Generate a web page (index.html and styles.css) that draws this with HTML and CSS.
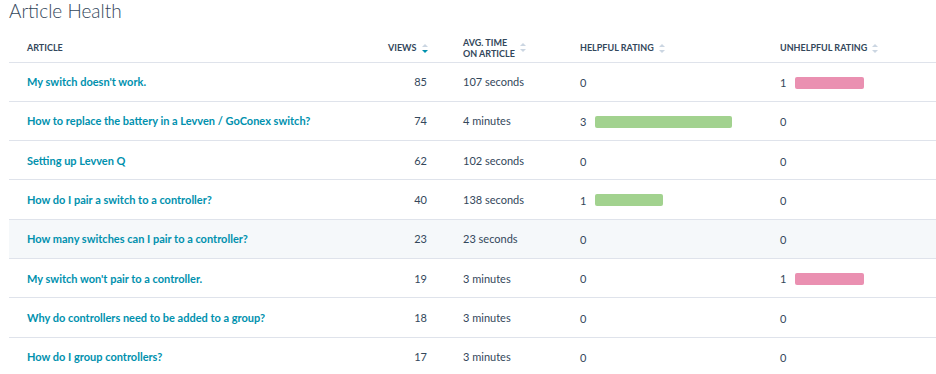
FILE: index.html
```
<!DOCTYPE html>
<html lang="en">

<head>
    <meta charset="UTF-8">
    <title>Article Health</title>
    <link rel="stylesheet" href="styles.css">
</head>

<body>
    <h1 class="page-title">Article Health</h1>

    <table class="health-table">
        <colgroup>
            <col class="col-article">
            <col class="col-views">
            <col class="col-time">
            <col class="col-helpful">
            <col class="col-unhelpful">
        </colgroup>
        <thead>
            <tr>
                <th>Article</th>
                <th class="num">Views <span class="sort active"></span></th>
                <th><span class="two-line">Avg. time<br>on article</span> <span class="sort"></span></th>
                <th>Helpful rating <span class="sort"></span></th>
                <th>Unhelpful rating <span class="sort"></span></th>
            </tr>
        </thead>
        <tbody>
            <tr>
                <td><a href="#">My switch doesn't work.</a></td>
                <td class="num">85</td>
                <td>107 seconds</td>
                <td><span class="count">0</span></td>
                <td><span class="count">1</span><span class="bar bad" style="width: 69px;"></span></td>
            </tr>
            <tr>
                <td><a href="#">How to replace the battery in a Levven / GoConex switch?</a></td>
                <td class="num">74</td>
                <td>4 minutes</td>
                <td><span class="count">3</span><span class="bar good" style="width: 137px;"></span></td>
                <td><span class="count">0</span></td>
            </tr>
            <tr>
                <td><a href="#">Setting up Levven Q</a></td>
                <td class="num">62</td>
                <td>102 seconds</td>
                <td><span class="count">0</span></td>
                <td><span class="count">0</span></td>
            </tr>
            <tr>
                <td><a href="#">How do I pair a switch to a controller?</a></td>
                <td class="num">40</td>
                <td>138 seconds</td>
                <td><span class="count">1</span><span class="bar good" style="width: 68px;"></span></td>
                <td><span class="count">0</span></td>
            </tr>
            <tr class="hover">
                <td><a href="#">How many switches can I pair to a controller?</a></td>
                <td class="num">23</td>
                <td>23 seconds</td>
                <td><span class="count">0</span></td>
                <td><span class="count">0</span></td>
            </tr>
            <tr>
                <td><a href="#">My switch won't pair to a controller.</a></td>
                <td class="num">19</td>
                <td>3 minutes</td>
                <td><span class="count">0</span></td>
                <td><span class="count">1</span><span class="bar bad" style="width: 69px;"></span></td>
            </tr>
            <tr>
                <td><a href="#">Why do controllers need to be added to a group?</a></td>
                <td class="num">18</td>
                <td>3 minutes</td>
                <td><span class="count">0</span></td>
                <td><span class="count">0</span></td>
            </tr>
            <tr>
                <td><a href="#">How do I group controllers?</a></td>
                <td class="num">17</td>
                <td>3 minutes</td>
                <td><span class="count">0</span></td>
                <td><span class="count">0</span></td>
            </tr>
        </tbody>
    </table>
</body>

</html>
```

FILE: styles.css
```
* {
    margin: 0;
    padding: 0;
    box-sizing: border-box;
    font-family: 'Lato', 'Noto Sans', sans-serif;
}

body {
    background-color: #fff;
    color: #33475b;
    padding: 0 0 0 9px;
}

.page-title {
    font-size: 19px;
    font-weight: 300;
    line-height: 22px;
    height: 34px;
    color: #33475b;
}

.health-table {
    width: 927px;
    border-collapse: collapse;
    table-layout: fixed;
}

.col-article { width: 361px; }
.col-views { width: 75px; }
.col-time { width: 117px; }
.col-helpful { width: 200px; }
.col-unhelpful { width: 174px; }

th {
    text-align: left;
    text-transform: uppercase;
    font-size: 9px;
    font-weight: 700;
    color: #33475b;
    height: 28px;
    padding: 0 18px;
    border-bottom: 1px solid #dfe3eb;
    white-space: nowrap;
}

th.num {
    text-align: right;
}

.two-line {
    display: inline-block;
    line-height: 11px;
    vertical-align: middle;
}

.sort {
    display: inline-block;
    width: 7px;
    height: 9px;
    margin-left: 3px;
    vertical-align: middle;
    position: relative;
}

.sort::before,
.sort::after {
    content: "";
    position: absolute;
    left: 0;
    border-left: 3.5px solid transparent;
    border-right: 3.5px solid transparent;
}

.sort::before {
    top: 0;
    border-bottom: 3.5px solid #cbd6e2;
}

.sort::after {
    bottom: 0;
    border-top: 3.5px solid #cbd6e2;
}

.sort.active::after {
    border-top-color: #0091ae;
}

td {
    height: 39.3px;
    padding: 0 18px;
    font-size: 11px;
    border-bottom: 1px solid #dfe3eb;
    white-space: nowrap;
}

td.num {
    text-align: right;
}

tbody tr:last-child td {
    border-bottom: none;
}

tr.hover td {
    background-color: #f5f8fa;
}

td a {
    color: #0091ae;
    font-weight: 700;
    font-size: 11px;
    text-decoration: none;
}

.count {
    display: inline-block;
    width: 15px;
    vertical-align: middle;
}

.bar {
    display: inline-block;
    height: 12px;
    border-radius: 2px;
    vertical-align: middle;
}

.bar.good {
    background-color: #a2d28f;
}

.bar.bad {
    background-color: #ea90b1;
}
```
